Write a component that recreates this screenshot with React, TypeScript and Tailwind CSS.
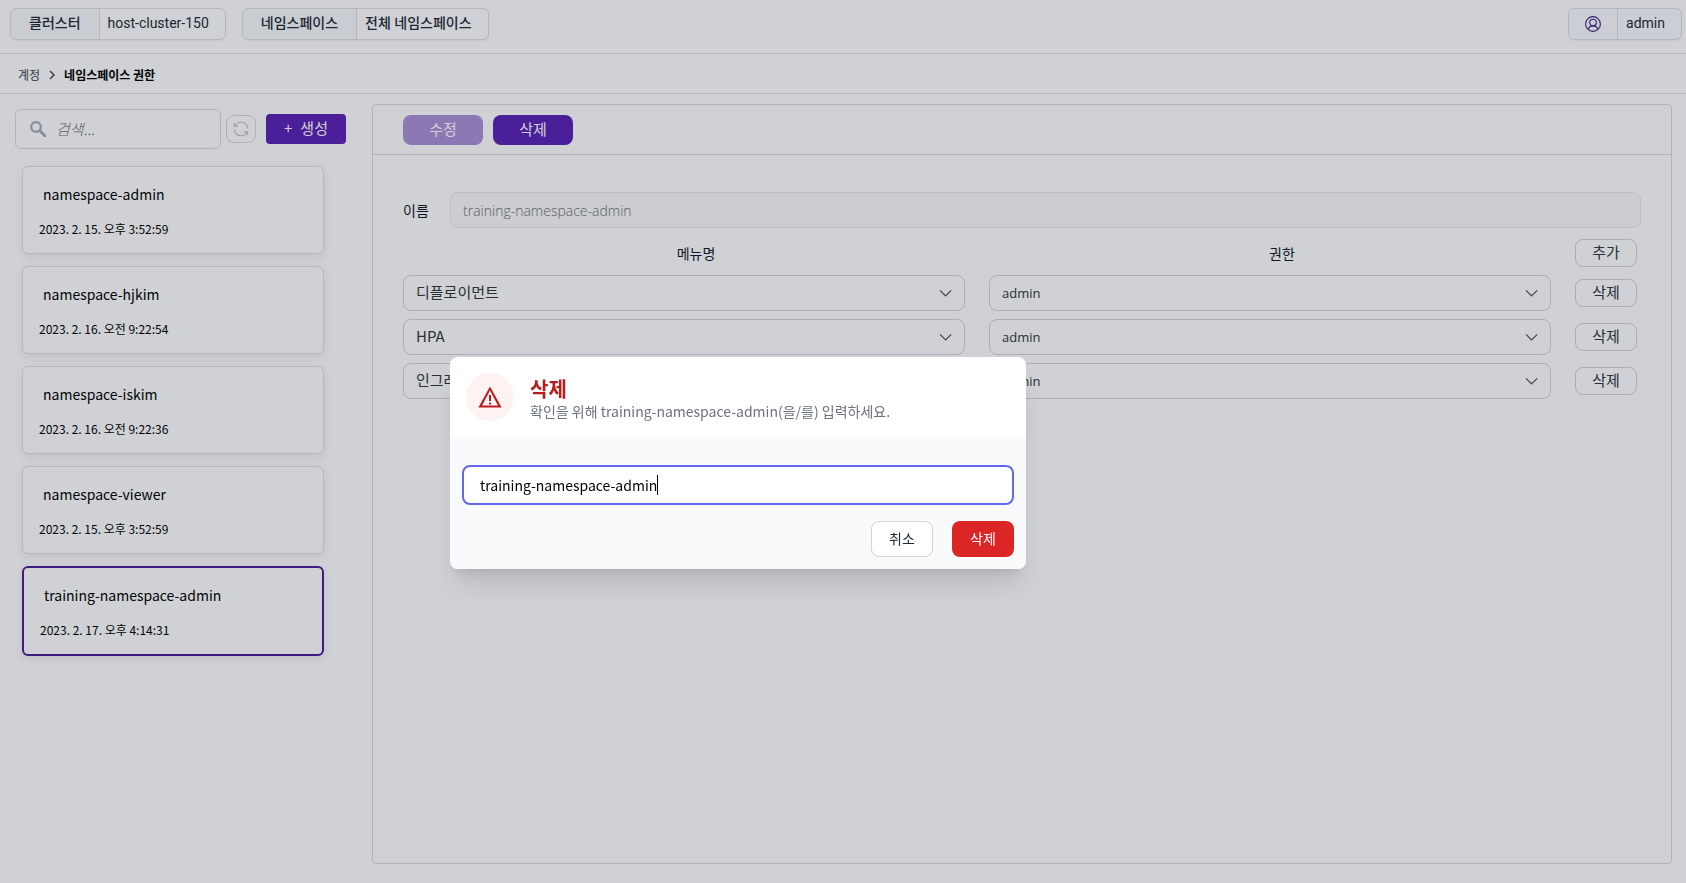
import React, { useEffect, useRef, useState } from 'react';

interface NamespaceItem {
  name: string;
  createdAt: string;
}

interface PermissionRow {
  menu: string;
  role: string;
}

const items: NamespaceItem[] = [
  { name: 'namespace-admin', createdAt: '2023. 2. 15. 오후 3:52:59' },
  { name: 'namespace-hjkim', createdAt: '2023. 2. 16. 오전 9:22:54' },
  { name: 'namespace-iskim', createdAt: '2023. 2. 16. 오전 9:22:36' },
  { name: 'namespace-viewer', createdAt: '2023. 2. 15. 오후 3:52:59' },
  { name: 'training-namespace-admin', createdAt: '2023. 2. 17. 오후 4:14:31' },
];

const permissions: PermissionRow[] = [
  { menu: '디플로이먼트', role: 'admin' },
  { menu: 'HPA', role: 'admin' },
  { menu: '인그레스', role: 'admin' },
];

const SearchIcon = () => (
  <svg viewBox="0 0 16 16" className="absolute left-[15px] w-4 h-4" fill="none" stroke="#a3abb8">
    <circle cx="6" cy="6" r="4.8" strokeWidth="2.2" />
    <path d="M9.6 9.6l5.2 5.2" strokeWidth="2.8" strokeLinecap="round" />
  </svg>
);

const RefreshIcon = () => (
  <svg viewBox="0 0 16 16" className="w-4 h-4" fill="none" stroke="currentColor" strokeWidth="1.2">
    <path d="M2.2 4.8A6.6 6.6 0 0 1 14.6 7.4" />
    <path d="M13.8 11.2A6.6 6.6 0 0 1 1.4 8.6" />
    <path d="M1.4 1.8v3.4h3.6M14.6 14.2v-3.4H11" />
  </svg>
);

const UserIcon = () => (
  <svg viewBox="0 0 16 16" className="w-4 h-4" fill="none" stroke="#42207f" strokeWidth="1.1">
    <circle cx="8" cy="8" r="7.4" />
    <circle cx="8" cy="6.6" r="3.3" />
    <path d="M3.4 13.6c.3-2.4 1.8-3.7 4.6-3.7s4.3 1.3 4.6 3.7" />
  </svg>
);

const ChevronDown = () => (
  <svg
    viewBox="0 0 14 14"
    className="absolute right-3 w-3.5 h-3.5 pointer-events-none"
    fill="none"
    stroke="#52525b"
    strokeWidth="1.2"
  >
    <path d="M1 4.4l5.6 5.6 5.6-5.6" />
  </svg>
);

const WarningIcon = () => (
  <svg viewBox="0 0 24 24" className="w-6 h-6" fill="#b91c1c">
    <path d="M12 1.4L.4 22.6h23.2L12 1.4zm0 4.2l8 14.8H4l8-14.8z" />
    <path d="M11 10h2v6h-2zM11 17.4h2v2h-2z" />
  </svg>
);

const SelectBox: React.FC<{ label: string; value: string; className: string }> = ({ label, value, className }) => (
  <div className="relative flex flex-1 items-center">
    <select
      aria-label={label}
      defaultValue={value}
      className={`appearance-none w-full h-9 px-3 rounded-lg border border-[#d4d4d8] bg-white text-[#333639] ${className}`}
    >
      <option>{value}</option>
    </select>
    <ChevronDown />
  </div>
);

const RowButton: React.FC<{ children: React.ReactNode }> = ({ children }) => (
  <button className="w-[62px] h-7 pb-0.5 rounded-lg border border-[#d4d4d8] text-[15px] leading-6">{children}</button>
);

const App: React.FC = () => {
  const [selected, setSelected] = useState('training-namespace-admin');
  const [isOpen, setIsOpen] = useState(true);
  const [confirmText, setConfirmText] = useState('training-namespace-admin');
  const [isTyping, setIsTyping] = useState(false);
  const inputRef = useRef<HTMLInputElement>(null);

  useEffect(() => {
    const input = inputRef.current;
    if (!input) return;
    input.focus();
    input.setSelectionRange(input.value.length, input.value.length);
  }, [isOpen]);

  const handleChange = (e: React.ChangeEvent<HTMLInputElement>) => {
    setIsTyping(true);
    setConfirmText(e.target.value);
  };

  return (
    <div className="flex flex-col min-h-screen bg-white text-black font-['Noto_Sans_CJK_KR',sans-serif]">
      {/* Top bar */}
      <header className="flex items-start justify-between pl-2.5 pr-1 pt-2 h-[54px] border-b border-[#e0e1e5] font-[Roboto,'Noto_Sans_CJK_KR',sans-serif] text-sm text-[#1f2937]">
        <div className="flex gap-4">
          <div className="flex h-8 rounded-md border border-[#dbe0e4] overflow-hidden shadow-xs">
            <span className="flex items-center px-[18px] pb-0.5 bg-[#f8fafc] border-r border-[#dbe0e4] font-medium">클러스터</span>
            <span className="flex items-center pl-2 pr-4 pb-0.5">host-cluster-150</span>
          </div>
          <div className="flex h-8 rounded-md border border-[#dbe0e4] overflow-hidden shadow-xs font-medium">
            <span className="flex items-center px-[18px] pb-0.5 bg-[#f8fafc] border-r border-[#dbe0e4]">네임스페이스</span>
            <span className="flex items-center pl-2 pr-4 pb-0.5">전체 네임스페이스</span>
          </div>
        </div>
        <button className="flex h-8 rounded-md border border-[#dbe0e4] overflow-hidden shadow-xs bg-[#fafcff]">
          <span className="flex items-center h-full px-4 border-r border-[#dbe0e4]">
            <UserIcon />
          </span>
          <span className="flex items-center h-full pl-2 pr-4 pb-0.5">admin</span>
        </button>
      </header>

      {/* Breadcrumb */}
      <nav className="flex items-center gap-2 h-10 px-[18px] pt-0.5 border-b border-[#e0e1e5] text-xs">
        <a href="#" className="text-[#374151]">계정</a>
        <svg viewBox="0 0 8 10" className="w-2 h-2.5" fill="none" stroke="#4b5563" strokeWidth="1.6">
          <path d="M2 1l4 4-4 4" />
        </svg>
        <a href="#" className="font-bold">네임스페이스 권한</a>
      </nav>

      <div className="flex flex-1 pt-2.5 pb-[19px] pr-3.5">
        {/* Namespace list */}
        <aside className="w-[372px] shrink-0 pl-[15px] pr-[26px]">
          <div className="flex items-center mt-[5px]">
            <div className="relative flex flex-1 items-center">
              <SearchIcon />
              <input
                type="text"
                aria-label="검색"
                placeholder="검색..."
                className="w-full h-10 pl-10 pb-0.5 rounded-md border border-[#dbdbdb] text-[15px] font-light placeholder:italic placeholder:text-[#71717a]"
              />
            </div>
            <button
              aria-label="새로고침"
              className="flex items-center justify-center ml-[5px] w-[30px] h-7 rounded-lg border border-[#d9d9d9] text-[#c4c4c4]"
            >
              <RefreshIcon />
            </button>
            <button className="flex items-center justify-center gap-2 ml-2.5 w-20 h-[30px] pb-0.5 rounded-sm bg-[#5b21b6] text-white text-[15px]">
              <span>+</span>
              <span>생성</span>
            </button>
          </div>

          <ul className="flex flex-col gap-3 mt-[17px] pl-[7px] pr-[22px]">
            {items.map((item) => (
              <li key={item.name}>
                <button
                  onClick={() => setSelected(item.name)}
                  className={`flex flex-col gap-[13px] w-full px-4 pt-[15px] pb-3.5 rounded-md text-left shadow-[0_3px_10px_rgba(0,0,0,0.08)] bg-white ${
                    selected === item.name ? 'border-2 border-[#4c1d95]' : 'border border-[#e0e0e0]'
                  }`}
                >
                  <span className="pl-1 text-sm leading-6">{item.name}</span>
                  <span className="text-xs leading-5">{item.createdAt}</span>
                </button>
              </li>
            ))}
          </ul>
        </aside>

        {/* Detail panel */}
        <main className="flex-1 rounded-sm border border-[#dbdbdb] text-sm text-[#333639]">
          <div className="flex items-center gap-2.5 h-[50px] px-[30px] border-b border-[#dbdbdb]">
            <button disabled className="w-20 h-[30px] pb-0.5 rounded-lg bg-[#ad90da] text-[15px] text-white">수정</button>
            <button
              onClick={() => setIsOpen(true)}
              className="w-20 h-[30px] pb-0.5 rounded-lg bg-[#5b21b6] text-[15px] text-white"
            >
              삭제
            </button>
          </div>

          <div className="px-[30px] pt-[37px]">
            <div className="flex items-center gap-5">
              <label htmlFor="role-name" className="w-[27px] shrink-0 whitespace-nowrap text-[#111827]">이름</label>
              <input
                id="role-name"
                type="text"
                disabled
                value="training-namespace-admin"
                className="flex-1 h-9 px-3 rounded-lg border border-[#e9e9ec] bg-[#fafafc] font-['Open_Sans',sans-serif] font-light text-[#6f7074]"
              />
            </div>

            <div className="flex flex-col gap-2 pr-1 mt-[11px]">
              <div className="flex items-center gap-6 h-7">
                <div className="flex-1 pl-6 text-center text-[#111827]">메뉴명</div>
                <div className="flex-1 pl-6 text-center text-[#111827]">권한</div>
                <RowButton>추가</RowButton>
              </div>
              {permissions.map((row) => (
                <div key={row.menu} className="flex items-center gap-6">
                  <SelectBox label="메뉴명" value={row.menu} className="pb-0.5 text-[15px]" />
                  <SelectBox label="권한" value={row.role} className="text-[13px] font-['Open_Sans',sans-serif]" />
                  <RowButton>삭제</RowButton>
                </div>
              ))}
            </div>
          </div>
        </main>
      </div>

      {isOpen && (
        <div className="fixed inset-0 z-10 flex items-center justify-center">
          {/* Backdrop */}
          <div className="absolute inset-0 bg-[#111827]/20" onClick={() => setIsOpen(false)} />

          {/* Modal */}
          <div
            role="dialog"
            aria-modal="true"
            aria-labelledby="dialog-title"
            className="relative w-full max-w-[576px] mr-[210px] mt-[42px] rounded-lg bg-white shadow-xl overflow-hidden"
          >
            <div className="flex items-start gap-4 p-4 h-20">
              <div className="flex items-center justify-center w-12 h-12 shrink-0 rounded-full bg-[#fef2f2]">
                <WarningIcon />
              </div>
              <div className="pt-1">
                <h3 id="dialog-title" className="text-xl leading-6 font-bold text-[#b91c1c]">삭제</h3>
                <p className="text-sm leading-5 text-[#6b7280]">
                  확인을 위해 training-namespace-admin(을/를) 입력하세요.
                </p>
              </div>
            </div>
            <div className="px-3 pt-7 pb-3 bg-[#f9fafb]">
              <div className="relative">
                <input
                  ref={inputRef}
                  type="text"
                  aria-labelledby="dialog-title"
                  value={confirmText}
                  onChange={handleChange}
                  className="w-full h-10 px-4 rounded-lg border-2 border-[#6366f1] bg-white text-sm outline-none"
                />
                {/* Caret shown until the first keystroke */}
                {!isTyping && <span className="absolute left-[195px] top-2.5 w-px h-5 bg-black" />}
              </div>
              <div className="flex justify-end gap-[19px] mt-4">
                <button
                  onClick={() => setIsOpen(false)}
                  className="w-[62px] h-9 pb-0.5 rounded-lg border border-[#d1d5db] bg-white text-sm text-[#1f2937]"
                >
                  취소
                </button>
                <button className="w-[62px] h-9 pb-0.5 rounded-lg bg-[#dc2626] text-sm text-white">삭제</button>
              </div>
            </div>
          </div>
        </div>
      )}
    </div>
  );
};

export default App;
